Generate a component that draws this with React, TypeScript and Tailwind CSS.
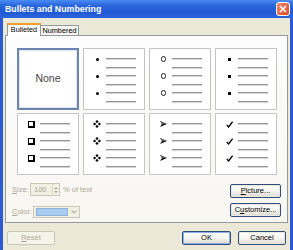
import React from "react";

const Line = () => (
  <div className="w-[30px] h-[2px] bg-[linear-gradient(#959595_50%,#d6d6d6_50%)]" />
);

type BulletKind = "dot" | "circle" | "square" | "box" | "diamonds" | "arrow" | "check";

const Bullet = ({ kind }: { kind: BulletKind }) => {
  switch (kind) {
    case "dot":
      return <div className="w-[3px] h-[3px] rounded-full bg-black" />;
    case "circle":
      return <div className="w-[5px] h-[6px] rounded-full border border-[#222]" />;
    case "square":
      return <div className="w-[3px] h-[3px] bg-black" />;
    case "box":
      return <div className="w-[7px] h-[7px] bg-white border-t border-l border-r-2 border-b-2 border-black" />;
    case "diamonds":
      return (
        <svg width="8" height="8" viewBox="0 0 8 8">
          <polygon points="4,0 5.6,1.6 4,3.2 2.4,1.6" fill="#000" />
          <polygon points="4,4.8 5.6,6.4 4,8 2.4,6.4" fill="#000" />
          <polygon points="0,4 1.6,2.4 3.2,4 1.6,5.6" fill="#000" />
          <polygon points="4.8,4 6.4,2.4 8,4 6.4,5.6" fill="#000" />
        </svg>
      );
    case "arrow":
      return (
        <svg width="7" height="6" viewBox="0 0 7 6">
          <polygon points="0,0 7,3 0,6 2,3" fill="#111" />
          <polygon points="0,0 7,3 2,3" fill="#666" />
        </svg>
      );
    case "check":
      return (
        <svg width="7" height="7" viewBox="0 0 7 7">
          <path d="M0.8 4 L2.6 6 L6.6 0.6" stroke="#000" strokeWidth="1.3" fill="none" />
        </svg>
      );
  }
};

const BulletCell = ({ kind }: { kind: BulletKind }) => (
  <div className="w-[62px] h-[62px] border border-[#c4c4c4] bg-white flex flex-col pt-[6px] pl-[8px]">
    {[0, 1, 2].map((i) => (
      <div key={i} className="flex flex-col">
        <div className="h-[8px] flex items-center">
          <div className="w-[10px] flex justify-center">
            <Bullet kind={kind} />
          </div>
          <div className="ml-[4px]">
            <Line />
          </div>
        </div>
        <div className="h-[9px] flex items-center pl-[14px]">
          <Line />
        </div>
      </div>
    ))}
  </div>
);

const NoneCell = () => (
  <div className="w-[62px] h-[62px] border-2 border-[#6b84b0] bg-white shadow-[inset_0_0_0_1px_#dfe6f2] flex items-center justify-center">
    <span className="text-[10.5px] text-[#444]">None</span>
  </div>
);

const XpButton = ({
  label,
  w,
  def,
  disabled,
}: {
  label: React.ReactNode;
  w: string;
  def?: boolean;
  disabled?: boolean;
}) => {
  if (disabled) {
    return (
      <div
        className={`${w} h-[14px] rounded-[2px] border border-[#c9c7ba] bg-[#f5f4ea] flex items-center justify-center text-[7.5px] text-[#aca899]`}
      >
        {label}
      </div>
    );
  }
  return (
    <div
      className={`${w} h-[14px] rounded-[2px] border border-[#2f4f7a] bg-[linear-gradient(180deg,#ffffff_0%,#f4f4f0_55%,#dcd8cc_100%)] flex items-center justify-center text-[7.5px] text-black ${
        def ? "shadow-[inset_0_0_0_1px_#8fb1ea]" : "shadow-[inset_0_0_0_1px_#e8e8e0]"
      }`}
    >
      {label}
    </div>
  );
};

export default function App() {
  return (
    <div className="w-[293px] h-[250px] overflow-hidden bg-[#ECE9D8] flex flex-col font-['Liberation_Sans',Arial,sans-serif]">
      {/* title bar */}
      <div className="h-[18px] shrink-0 flex items-center justify-between pl-[5px] pr-[3px] bg-[linear-gradient(180deg,#4a8df5_0%,#2a66dc_30%,#2159d3_70%,#2c67de_100%)]">
        <span className="text-[8.8px] font-bold text-white leading-none">Bullets and Numbering</span>
        <div className="w-[14px] h-[14px] rounded-[3px] border border-white bg-[linear-gradient(135deg,#ef8a6c,#d94a2a)] flex items-center justify-center">
          <svg width="8" height="8" viewBox="0 0 8 8">
            <path d="M1 1 L7 7 M7 1 L1 7" stroke="#fff" strokeWidth="1.6" />
          </svg>
        </div>
      </div>

      {/* body */}
      <div className="flex-1 flex flex-col border-l-[3px] border-r-[3px] border-[#2a5bd3]">
        {/* tabs */}
        <div className="flex items-end pt-[5px] pl-[4px]">
          <div className="relative z-10 -mb-px h-[13px] w-[34px] bg-white border-x border-[#919b9c] border-t-2 border-t-[#f0a030] flex items-center justify-center text-[7.3px] text-black">
            Bulleted
          </div>
          <div className="h-[10px] w-[38px] bg-[#f6f5f1] border-r border-t border-r-[#919b9c] border-t-[#919b9c] flex items-center justify-center">
            <span className="text-[7.3px] text-black leading-none">Numbered</span>
          </div>
        </div>

        {/* panel */}
        <div className="mx-[2px] h-[188px] border border-[#919b9c] bg-[linear-gradient(180deg,#fdfdfd,#f7f6f1)] flex flex-col pt-[12px] px-[6px]">
          <div className="ml-[5px] grid grid-cols-[repeat(4,62px)] gap-x-[4px] gap-y-[3px]">
            <NoneCell />
            <BulletCell kind="dot" />
            <BulletCell kind="circle" />
            <BulletCell kind="square" />
            <BulletCell kind="box" />
            <BulletCell kind="diamonds" />
            <BulletCell kind="arrow" />
            <BulletCell kind="check" />
          </div>

          <div className="flex mt-[8px] text-[7.5px] text-[#aca899]">
            <div className="flex flex-col">
              <div className="flex items-center h-[13px]">
                <span className="w-[18px]">
                  <span className="underline">S</span>ize:
                </span>
                <div className="w-[30px] h-[13px] border border-[#c9c7ba] bg-[#f2f0e2] flex items-center pl-[3px]">
                  <span className="flex-1">100</span>
                  <div className="w-[7px] h-full flex flex-col items-center justify-center gap-[2px] border-l border-[#dcdacb]">
                    <svg width="4" height="2" viewBox="0 0 4 2">
                      <path d="M0 2 L2 0 L4 2 Z" fill="#aca899" />
                    </svg>
                    <svg width="4" height="2" viewBox="0 0 4 2">
                      <path d="M0 0 L2 2 L4 0 Z" fill="#aca899" />
                    </svg>
                  </div>
                </div>
                <span className="ml-[3px]">% of text</span>
              </div>
              <div className="flex items-center h-[12px] mt-[10px]">
                <span className="w-[21px]">
                  <span className="underline">C</span>olor:
                </span>
                <div className="w-[47px] h-[12px] border border-[#c9c7ba] bg-[#f2f0e2] flex items-center pl-[2px]">
                  <div className="w-[32px] h-[8px] bg-[#a9cdf0] border border-[#8fb2d8]" />
                  <div className="flex-1 flex justify-center">
                    <svg width="6" height="4" viewBox="0 0 6 4">
                      <path d="M0.5 0.5 L3 3 L5.5 0.5" stroke="#b8b5a6" strokeWidth="1.2" fill="none" />
                    </svg>
                  </div>
                </div>
              </div>
            </div>
            <div className="ml-auto flex flex-col gap-[5px] pt-[1px]">
              <XpButton w="w-[51px]" label={<span><span className="underline">P</span>icture...</span>} />
              <XpButton w="w-[51px]" label={<span>C<span className="underline">u</span>stomize...</span>} />
            </div>
          </div>
        </div>

        {/* bottom buttons */}
        <div className="flex items-center mt-[8px] px-[4px]">
          <XpButton w="w-[48px]" disabled label={<span><span className="underline">R</span>eset</span>} />
          <div className="ml-auto flex gap-[7px]">
            <XpButton w="w-[49px]" def label="OK" />
            <XpButton w="w-[48px]" label="Cancel" />
          </div>
        </div>
      </div>
    </div>
  );
}
